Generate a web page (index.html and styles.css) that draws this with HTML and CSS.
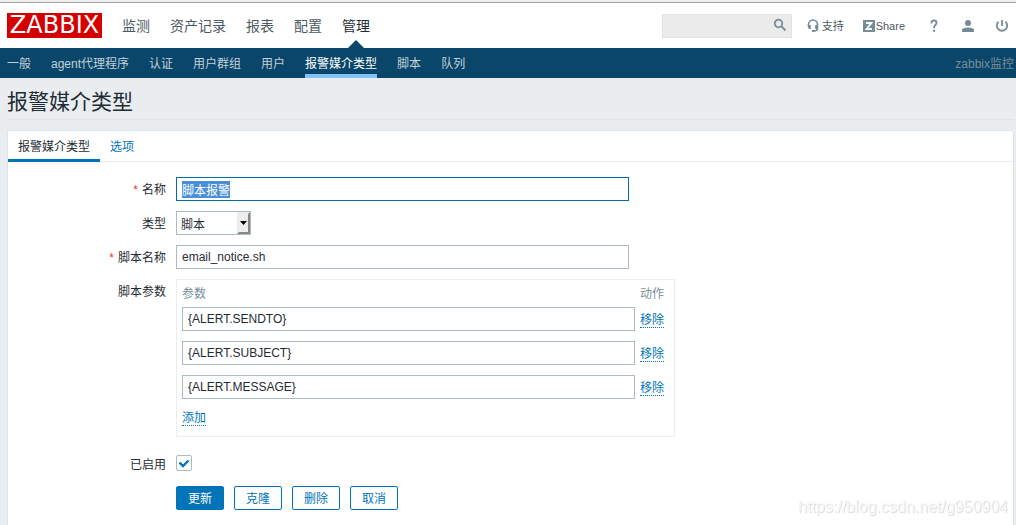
FILE: index.html
```html
<!DOCTYPE html>
<html lang="zh-CN">
<head>
<meta charset="utf-8">
<meta name="viewport" content="width=device-width, initial-scale=1">
<title>报警媒介类型</title>
<link rel="stylesheet" href="styles.css">
</head>
<body>
<header class="header">
  <a class="logo" href="#">ZABBIX</a>
  <nav class="main-nav">
    <a href="#">监测</a>
    <a href="#">资产记录</a>
    <a href="#">报表</a>
    <a href="#">配置</a>
    <a href="#" class="selected">管理</a>
  </nav>
  <form class="search" role="search">
    <input class="search-input" type="text" aria-label="搜索">
    <button class="search-button" type="button" aria-label="搜索">
      <svg width="14" height="14" viewBox="0 0 14 14" fill="none" stroke="#768d99" stroke-width="1.800"><circle cx="5.500" cy="5.500" r="3.800"/><path d="M8.200 8.200L12.500 12.500"/></svg>
    </button>
  </form>
  <div class="tools">
    <a class="tool support" href="#">
      <svg width="12" height="14" viewBox="0 0 12 14"><path d="M1.500 8V5.500a4.500 4.500 0 0 1 9 0V9.500Q10.500 12 7 12" fill="none" stroke="#768d99" stroke-width="1.600"/><path d="M1 6h2.800v4H2.500Q.8 9.500 1 8zM8.200 6H11v2q0 2-1.500 2H8.200zM5 11h2.500v2H5z" fill="#768d99"/></svg>
      <span>支持</span>
    </a>
    <a class="tool share" href="#">
      <svg width="12" height="12" viewBox="0 0 12 12"><path d="M0 0h12v12H0z" fill="#768d99"/><path d="M3 3h5.300L3.700 9H9" fill="none" stroke="#fff" stroke-width="1.900"/></svg>
      <span>Share</span>
    </a>
    <a class="tool help" href="#" aria-label="帮助">
      <svg width="8" height="14" viewBox="0 0 8 14"><path d="M1.500 4.500V3.500q0-2 2.500-2T6.500 3.700C6.500 6 4 6 4 9.200" fill="none" stroke="#768d99" stroke-width="1.800"/><path d="M3 10.800h2v2H3z" fill="#768d99"/></svg>
    </a>
    <a class="tool user" href="#" aria-label="用户资料">
      <svg width="12" height="12" viewBox="0 0 12 12" fill="#768d99"><circle cx="6" cy="3" r="3"/><path d="M0 12V10q0-2.500 6-2.500T12 10v2z"/></svg>
    </a>
    <a class="tool signout" href="#" aria-label="退出">
      <svg width="14" height="14" viewBox="0 0 14 14" fill="none" stroke="#768d99" stroke-width="1.800"><path d="M7 1v6M3.500 2.700a5.200 5.200 0 1 0 7 0"/></svg>
    </a>
  </div>
</header>
<nav class="sub-nav">
  <a href="#">一般</a>
  <a href="#">agent代理程序</a>
  <a href="#">认证</a>
  <a href="#">用户群组</a>
  <a href="#">用户</a>
  <a href="#" class="selected">报警媒介类型</a>
  <a href="#">脚本</a>
  <a href="#">队列</a>
  <span class="server-name">zabbix监控</span>
</nav>
<main class="page">
  <h1 class="title">报警媒介类型</h1>
  <section class="panel">
    <nav class="tabs">
      <a href="#" class="tab active">报警媒介类型</a>
      <a href="#" class="tab">选项</a>
    </nav>
    <form class="form">
      <label class="label required" for="name">名称</label>
      <div class="field"><input class="text" id="name" type="text" value="脚本报警"></div>

      <label class="label" for="type">类型</label>
      <div class="field">
        <span class="select-box">
          <select class="select" id="type"><option>脚本</option></select>
          <svg class="select-arrow" width="13" height="22" viewBox="0 0 13 22"><path d="M0 0h13v22H0z" fill="#ededed"/><path d="M13 0v22H0l2-2h9V2z" fill="#888"/><path d="M3 9h7L6.500 13z" fill="#000"/></svg>
        </span>
      </div>

      <label class="label required" for="script">脚本名称</label>
      <div class="field"><input class="text" id="script" type="text" value="email_notice.sh"></div>

      <span class="label" id="params-label">脚本参数</span>
      <div class="field">
        <div class="params">
          <table class="params-table" aria-labelledby="params-label">
            <thead><tr><th>参数</th><th>动作</th></tr></thead>
            <tbody>
              <tr><td><input class="text" type="text" aria-label="参数 1" value="{ALERT.SENDTO}"></td><td><button class="link" type="button">移除</button></td></tr>
              <tr><td><input class="text" type="text" aria-label="参数 2" value="{ALERT.SUBJECT}"></td><td><button class="link" type="button">移除</button></td></tr>
              <tr><td><input class="text" type="text" aria-label="参数 3" value="{ALERT.MESSAGE}"></td><td><button class="link" type="button">移除</button></td></tr>
            </tbody>
          </table>
          <button class="link" type="button">添加</button>
        </div>
      </div>

      <label class="label enabled-label" for="enabled">已启用</label>
      <div class="field enabled-field">
        <span class="check-box">
          <input class="check" id="enabled" type="checkbox" checked>
          <svg class="check-mark" width="16" height="16" viewBox="0 0 16 16" fill="none" stroke="#0275b8" stroke-width="2.400"><path d="M3.500 7.500L7 11L12.500 5.500"/></svg>
        </span>
      </div>

      <div class="actions">
        <button class="button primary" type="button">更新</button>
        <button class="button" type="button">克隆</button>
        <button class="button" type="button">删除</button>
        <button class="button" type="button">取消</button>
      </div>
    </form>
  </section>
</main>
<div class="watermark">https://blog.csdn.net/g950904</div>
<script src="script.js"></script>
</body>
</html>
```
FILE: styles.css
```css
* { box-sizing: border-box; }

body {
  margin: 0;
  min-height: 100vh;
  display: flex;
  flex-direction: column;
  background: #e9edf0;
  color: #1f2c33;
  font: 12px/16px "Liberation Sans", "Noto Sans CJK SC", sans-serif;
}

a { color: inherit; text-decoration: none; }
svg { display: block; }
input, select, button { font: inherit; color: inherit; margin: 0; }

.header {
  display: flex;
  align-items: center;
  height: 48px;
  padding: 3px 7px 0;
  background: linear-gradient(#f0f0f0 2px, #a0a0a0 2px 3px, #fff 3px);
}
.logo {
  width: 95px;
  height: 25px;
  margin-right: 20px;
  background: #d40000;
  color: #fff;
  font: 24px/25px "DejaVu Sans", sans-serif;
  text-align: center;
}
.main-nav { display: flex; align-self: stretch; gap: 20px; }
.main-nav a {
  display: flex;
  align-items: center;
  position: relative;
  font-size: 14px;
  color: #4d5a62;
}
.main-nav .selected { color: #1f2c33; }
.main-nav .selected::after {
  content: "";
  position: absolute;
  bottom: 0;
  left: 50%;
  margin-left: -8px;
  border: solid transparent;
  border-width: 0 8px 8px;
  border-bottom-color: #0a466a;
}

.search { position: relative; margin-left: auto; }
.search-input {
  display: block;
  width: 130px;
  height: 24px;
  padding: 0 30px 0 5px;
  border: 1px solid #dfe4e7;
  background: #ebebeb;
}
.search-button {
  position: absolute;
  top: 4px;
  right: 5px;
  padding: 0;
  border: 0;
  background: none;
}

.tools { display: flex; align-items: center; margin-left: 15px; }
.tool { display: flex; align-items: center; gap: 3px; font-size: 11px; color: #4d5a62; }
.share { margin-left: 19px; gap: 1px; }
.help { margin-left: 25px; }
.user { margin-left: 24px; }
.signout { margin-left: 21px; }

.sub-nav {
  display: flex;
  gap: 20px;
  height: 30px;
  padding: 0 2px 0 7px;
  background: #0a466a;
  color: #c3d1da;
  line-height: 32px;
}
.sub-nav .selected { color: #fff; border-bottom: 4px solid #80c4f5; }
.server-name { margin-left: auto; color: #768d99; }

.page { flex: 1; display: flex; flex-direction: column; padding: 0 2px 0 7px; }
.title {
  margin: 0 0 10px;
  padding: 10px 0 4px;
  border-bottom: 1px solid #dfe4e7;
  font-size: 21px;
  font-weight: 400;
  line-height: 27px;
}
.panel { flex: 1; border: 1px solid #dfe4e7; border-bottom: 0; background: #fff; }

.tabs { display: flex; height: 31px; border-bottom: 1px solid #ebeef0; }
.tab { height: 31px; padding: 0 10px; line-height: 32px; color: #0275b8; }
.tab.active { color: #1f2c33; border-bottom: 3px solid #0275b8; }

.form {
  display: grid;
  grid-template-columns: 158px minmax(0, 1fr);
  gap: 10px;
  padding: 15px 0;
}
.label { justify-self: end; height: 24px; line-height: 26px; }
.required::before { content: "*"; margin-right: 4px; color: #e33734; }
.text {
  display: block;
  width: 453px;
  max-width: 100%;
  height: 24px;
  padding: 0 5px;
  border: 1px solid #acbbc2;
  border-radius: 0;
  background: #fff;
  outline: 0;
}
.text:focus { border-color: #006fa8; }
.text::selection { background: #4a90d9; color: #fff; }

.select-box, .check-box { position: relative; display: inline-block; vertical-align: top; }
.select {
  display: block;
  appearance: none;
  width: 75px;
  height: 24px;
  padding: 3px 14px 0 4px;
  border: 1px solid #acbbc2;
  border-radius: 0;
  background: #fff;
}
.select-arrow { position: absolute; top: 1px; right: 1px; pointer-events: none; }

.params {
  width: fit-content;
  padding: 5px 10px 10px 5px;
  border: 1px solid #ebeef0;
}
.params-table { border-collapse: collapse; }
.params-table th {
  padding: 1px 0 5px;
  font-weight: 400;
  text-align: left;
  color: #768d99;
}
.params-table td { padding: 0 5px 10px 0; }
.params-table td:last-child { padding-right: 0; }
.link {
  display: block;
  height: 17px;
  padding: 0;
  border: 0;
  border-bottom: 1px dotted #0275b8;
  background: none;
  color: #0275b8;
  line-height: 18px;
}

.enabled-label { margin-top: 5px; }
.enabled-field { margin-top: 8px; }
.check {
  display: block;
  appearance: none;
  width: 16px;
  height: 16px;
  border: 1px solid #acbbc2;
  border-radius: 2px;
  background: #fff;
}
.check-mark { position: absolute; top: 0; left: 0; visibility: hidden; pointer-events: none; }
.check:checked + .check-mark { visibility: visible; }

.actions { grid-column: 2; display: flex; gap: 10px; }
.button {
  height: 24px;
  padding: 2px 11px 0;
  border: 1px solid #0275b8;
  border-radius: 2px;
  background: #fff;
  color: #0275b8;
}
.button.primary { background: #0275b8; color: #fff; }

.watermark {
  position: fixed;
  right: 8px;
  bottom: 8px;
  font-size: 16px;
  line-height: 20px;
  color: #f8f8f8;
  text-shadow: 1px 1px 1px #d8d8d8;
}
```
FILE: script.js
```js
const nameInput = document.getElementById("name");
nameInput.focus();
nameInput.select();
```
